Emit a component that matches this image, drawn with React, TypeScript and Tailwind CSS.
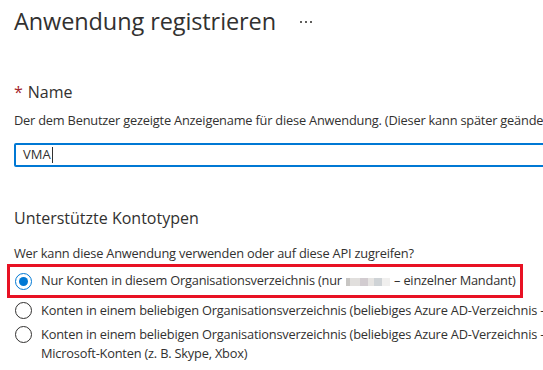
export default function App() {
  return (
    <div
      className="w-[543px] h-[370px] overflow-hidden bg-white text-[#323130] relative"
      style={{ fontFamily: '"Open Sans", "Noto Sans", sans-serif' }}
    >
      {/* Header */}
      <div className="flex items-center pl-[14px] pt-[2px] h-[40px]">
        <h1 className="text-[23.5px] leading-[32px] font-normal whitespace-nowrap tracking-[-0.1px]">Anwendung registrieren</h1>
        <div className="ml-[24px] flex gap-[3px] mt-[2px]">
          <span className="w-[2px] h-[2px] bg-[#605e5c]" />
          <span className="w-[2px] h-[2px] bg-[#605e5c]" />
          <span className="w-[2px] h-[2px] bg-[#605e5c]" />
        </div>
      </div>

      {/* Name */}
      <div className="pl-[14px] mt-[41px] whitespace-nowrap">
        <div className="text-[16px] leading-[22px] flex">
          <span className="text-[#a4262c] mr-[5px]">*</span>
          <span>Name</span>
        </div>
        <p className="text-[12.8px] leading-[18px] mt-[8px] tracking-[-0.2px]">
          Der dem Benutzer gezeigte Anzeigename für diese Anwendung. (Dieser kann später geändert werden.)
        </p>
        <div className="mt-[14px] h-[24px] w-[560px] border-2 border-[#0078d4] rounded-[2px] flex items-center pl-[7px] text-[13px]">
          <span>VMA</span>
          <span className="w-px h-[16px] bg-[#323130] ml-px" />
        </div>
      </div>

      {/* Kontotypen */}
      <div className="pl-[14px] mt-[40px] whitespace-nowrap">
        <div className="text-[16px] leading-[22px]">Unterstützte Kontotypen</div>
        <p className="text-[12.8px] leading-[18px] mt-[15px] tracking-[-0.2px]">
          Wer kann diese Anwendung verwenden oder auf diese API zugreifen?
        </p>
      </div>

      <div className="mt-[2px] ml-[7px] w-[516px] h-[34px] border-[3px] border-[#e81123] flex items-center pl-[5px] text-[12.8px] tracking-[-0.2px] whitespace-nowrap">
        <span className="w-[17px] h-[17px] rounded-full border border-[#0078d4] flex items-center justify-center shrink-0">
          <span className="w-[9px] h-[9px] rounded-full bg-[#0078d4]" />
        </span>
        <span className="ml-[9px]">
          Nur Konten in diesem Organisationsverzeichnis (nur{" "}
          <span className="inline-flex align-middle gap-0 mx-[1px]">
            <span className="w-[4px] h-[8px] bg-[#c8c6c4]" />
            <span className="w-[10px] h-[8px] bg-[#e1dfdd]" />
            <span className="w-[8px] h-[8px] bg-[#d2ccd0]" />
            <span className="w-[6px] h-[8px] bg-[#e6e4e2]" />
            <span className="w-[8px] h-[8px] bg-[#cfd3d6]" />
            <span className="w-[8px] h-[8px] bg-[#f0efee]" />
          </span>{" "}
          – einzelner Mandant)
        </span>
      </div>

      <div className="pl-[15px] text-[12.8px] tracking-[-0.2px] whitespace-nowrap">
        <div className="flex items-start mt-[3px]">
          <span className="w-[17px] h-[17px] rounded-full border border-[#323130] shrink-0 mt-px" />
          <span className="ml-[9px] leading-[19px]">
            Konten in einem beliebigen Organisationsverzeichnis (beliebiges Azure AD-Verzeichnis – mehrinstanzenfähig)
          </span>
        </div>
        <div className="flex items-start mt-[5px]">
          <span className="w-[17px] h-[17px] rounded-full border border-[#323130] shrink-0 mt-px" />
          <span className="ml-[9px] leading-[19px]">
            Konten in einem beliebigen Organisationsverzeichnis (beliebiges Azure AD-Verzeichnis – mehrinstanzenfähig) und persönliche
            <br />
            Microsoft-Konten (z. B. Skype, Xbox)
          </span>
        </div>
        <div className="flex items-start mt-[7px]">
          <span className="w-[17px] h-[17px] rounded-full border border-[#323130] shrink-0 mt-px" />
          <span className="ml-[9px] leading-[19px]">Nur persönliche Microsoft-Konten</span>
        </div>
      </div>
    </div>
  );
}
